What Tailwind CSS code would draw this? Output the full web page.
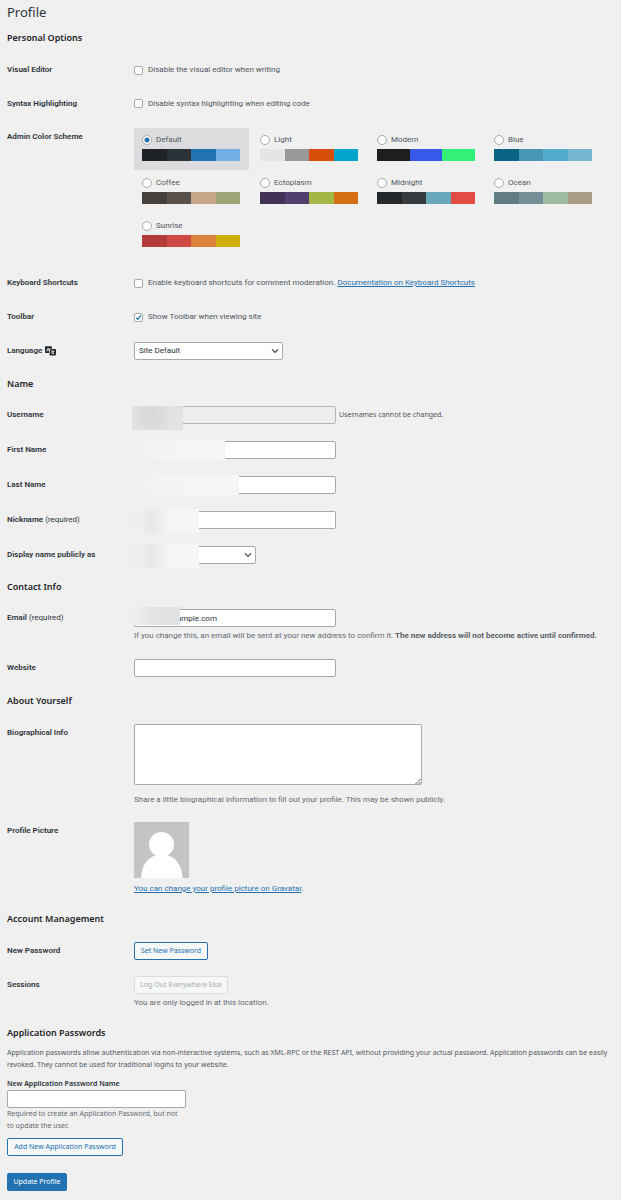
<!DOCTYPE html>
<html lang="en">
<head>
    <meta charset="UTF-8">
    <meta name="viewport" content="width=device-width, initial-scale=1.0">
    <title>Profile</title>
    <script src="https://cdn.jsdelivr.net/npm/@tailwindcss/browser@4"></script>
</head>
<body class="bg-[#f0f0f0] font-['Noto_Sans','Open_Sans',sans-serif] text-[7px] leading-[12px] text-[#50575e]">
    <form class="px-[7px] pt-1 pb-2">
        <h1 class="text-[13px] leading-[16px] text-[#2c3338]">Profile</h1>

        <!-- Personal Options -->
        <h2 class="mt-3 mb-[9px] text-[9px] leading-[12px] font-semibold text-[#1d2327]">Personal Options</h2>
        <div class="font-[Roboto,sans-serif] text-[8px]">
            <div class="grid grid-cols-[127px_1fr] items-center h-[34px]">
                <span class="font-semibold text-[#2c3338]">Visual Editor</span>
                <label class="flex items-center gap-[5px]">
                    <input type="checkbox" class="appearance-none size-[9px] rounded-[2px] border border-[#a7aaad] bg-white">
                    Disable the visual editor when writing
                </label>
            </div>
            <div class="grid grid-cols-[127px_1fr] items-center h-[33px]">
                <span class="font-semibold text-[#2c3338]">Syntax Highlighting</span>
                <label class="flex items-center gap-[5px]">
                    <input type="checkbox" class="appearance-none size-[9px] rounded-[2px] border border-[#a7aaad] bg-white">
                    Disable syntax highlighting when editing code
                </label>
            </div>
            <div class="grid grid-cols-[127px_1fr] pt-2 pb-[10px]">
                <span class="pt-[3px] font-semibold text-[#2c3338]">Admin Color Scheme</span>
                <div class="grid grid-cols-[repeat(4,115px)] gap-x-[2px] gap-y-px">
                    <label class="h-[42px] bg-[#dcdcde] px-2 pt-[6px]">
                        <span class="flex items-center gap-1"><input type="radio" name="scheme" checked class="appearance-none size-[10px] rounded-full border border-[#a7aaad] bg-white checked:bg-[radial-gradient(circle,#2271b1_2px,#fff_3px)]">Default</span>
                        <span class="mt-[3px] flex h-3 w-[98px]"><i class="flex-1 bg-[#1d2327]"></i><i class="flex-1 bg-[#2c3338]"></i><i class="flex-1 bg-[#2271b1]"></i><i class="flex-1 bg-[#72aee6]"></i></span>
                    </label>
                    <label class="h-[42px] px-[9px] pt-[6px]">
                        <span class="flex items-center gap-1"><input type="radio" name="scheme" class="appearance-none size-[10px] rounded-full border border-[#a7aaad] bg-white">Light</span>
                        <span class="mt-[3px] flex h-3 w-[98px]"><i class="flex-1 bg-[#e5e5e5]"></i><i class="flex-1 bg-[#999]"></i><i class="flex-1 bg-[#d64e07]"></i><i class="flex-1 bg-[#04a4cc]"></i></span>
                    </label>
                    <label class="h-[42px] px-[9px] pt-[6px]">
                        <span class="flex items-center gap-1"><input type="radio" name="scheme" class="appearance-none size-[10px] rounded-full border border-[#a7aaad] bg-white">Modern</span>
                        <span class="mt-[3px] flex h-3 w-[98px]"><i class="flex-1 bg-[#1e1e1e]"></i><i class="flex-1 bg-[#3858e9]"></i><i class="flex-1 bg-[#33f078]"></i></span>
                    </label>
                    <label class="h-[42px] px-[9px] pt-[6px]">
                        <span class="flex items-center gap-1"><input type="radio" name="scheme" class="appearance-none size-[10px] rounded-full border border-[#a7aaad] bg-white">Blue</span>
                        <span class="mt-[3px] flex h-3 w-[98px]"><i class="flex-1 bg-[#096484]"></i><i class="flex-1 bg-[#4796b3]"></i><i class="flex-1 bg-[#52accc]"></i><i class="flex-1 bg-[#74b6ce]"></i></span>
                    </label>
                    <label class="h-[42px] px-2 pt-[6px]">
                        <span class="flex items-center gap-1"><input type="radio" name="scheme" class="appearance-none size-[10px] rounded-full border border-[#a7aaad] bg-white">Coffee</span>
                        <span class="mt-[3px] flex h-3 w-[98px]"><i class="flex-1 bg-[#46403c]"></i><i class="flex-1 bg-[#59524c]"></i><i class="flex-1 bg-[#c7a589]"></i><i class="flex-1 bg-[#9ea476]"></i></span>
                    </label>
                    <label class="h-[42px] px-[9px] pt-[6px]">
                        <span class="flex items-center gap-1"><input type="radio" name="scheme" class="appearance-none size-[10px] rounded-full border border-[#a7aaad] bg-white">Ectoplasm</span>
                        <span class="mt-[3px] flex h-3 w-[98px]"><i class="flex-1 bg-[#413256]"></i><i class="flex-1 bg-[#523f6d]"></i><i class="flex-1 bg-[#a3b745]"></i><i class="flex-1 bg-[#d46f15]"></i></span>
                    </label>
                    <label class="h-[42px] px-[9px] pt-[6px]">
                        <span class="flex items-center gap-1"><input type="radio" name="scheme" class="appearance-none size-[10px] rounded-full border border-[#a7aaad] bg-white">Midnight</span>
                        <span class="mt-[3px] flex h-3 w-[98px]"><i class="flex-1 bg-[#25282b]"></i><i class="flex-1 bg-[#363b3f]"></i><i class="flex-1 bg-[#69a8bb]"></i><i class="flex-1 bg-[#e14d43]"></i></span>
                    </label>
                    <label class="h-[42px] px-[9px] pt-[6px]">
                        <span class="flex items-center gap-1"><input type="radio" name="scheme" class="appearance-none size-[10px] rounded-full border border-[#a7aaad] bg-white">Ocean</span>
                        <span class="mt-[3px] flex h-3 w-[98px]"><i class="flex-1 bg-[#627c83]"></i><i class="flex-1 bg-[#738e96]"></i><i class="flex-1 bg-[#9ebaa0]"></i><i class="flex-1 bg-[#aa9d88]"></i></span>
                    </label>
                    <label class="h-[42px] px-2 pt-[6px]">
                        <span class="flex items-center gap-1"><input type="radio" name="scheme" class="appearance-none size-[10px] rounded-full border border-[#a7aaad] bg-white">Sunrise</span>
                        <span class="mt-[3px] flex h-3 w-[98px]"><i class="flex-1 bg-[#b43c38]"></i><i class="flex-1 bg-[#cf4944]"></i><i class="flex-1 bg-[#dd823b]"></i><i class="flex-1 bg-[#ccaf0b]"></i></span>
                    </label>
                </div>
            </div>
            <div class="grid grid-cols-[127px_1fr] items-center h-[34px]">
                <span class="font-semibold text-[#2c3338]">Keyboard Shortcuts</span>
                <div class="flex items-center gap-[2px]">
                    <label class="flex items-center gap-[5px]">
                        <input type="checkbox" class="appearance-none size-[9px] rounded-[2px] border border-[#a7aaad] bg-white">
                        Enable keyboard shortcuts for comment moderation.
                    </label>
                    <a href="#" class="text-[#2271b1] underline">Documentation on Keyboard Shortcuts</a>
                </div>
            </div>
            <div class="grid grid-cols-[127px_1fr] items-center h-[34px]">
                <span class="font-semibold text-[#2c3338]">Toolbar</span>
                <label class="flex items-center gap-[5px]">
                    <span class="relative flex">
                        <input type="checkbox" checked class="appearance-none size-[9px] rounded-[2px] border border-[#a7aaad] bg-white">
                        <svg class="pointer-events-none absolute inset-0" width="9" height="9" viewBox="0 0 9 9" fill="none" stroke="#2271b1" stroke-width="1.3"><path d="M2.2 4.6 L3.9 6.3 L6.9 2.4"/></svg>
                    </span>
                    Show Toolbar when viewing site
                </label>
            </div>
            <div class="grid grid-cols-[127px_1fr] items-center h-[34px]">
                <label for="language" class="flex items-center gap-[3px] font-semibold text-[#2c3338]">
                    Language
                    <svg width="11" height="10" viewBox="0 0 11 10">
                        <path fill="#1d2327" d="M0.8 0.3h5.4q.8 0 .8.8V3h3.2q.8 0 .8.8v4.800q0 .8-.8.8H5.300q-.8 0-.8-.8V7H.8Q0 7 0 6.200V1.100Q0 .3.8.3z"/>
                        <path fill="none" stroke="#f0f0f0" stroke-width=".8" d="M1.500 5.500L3.100 1.900L4.200 4.200M2.200 4.200h2M6.700 3H4.500v4M6 5.300h3.500M7.700 4.300v1M6.300 8q2-.8 2.600-2.600M6.700 6q.8 1.600 2.500 2"/>
                    </svg>
                </label>
                <div class="relative w-[149px]">
                    <select id="language" class="block appearance-none w-full h-[18px] rounded-[2px] border border-[#a7aaad] bg-white pl-1 text-[#2c3338]"><option>Site Default</option></select>
                    <svg class="pointer-events-none absolute right-1 top-[6px]" width="8" height="6" viewBox="0 0 8 6" fill="none" stroke="#3c434a" stroke-width="1.2"><path d="M1 1.300 L4 4.300 L7 1.300"/></svg>
                </div>
            </div>
        </div>

        <!-- Name -->
        <h2 class="mt-[10px] mb-[7px] text-[9px] leading-[12px] font-semibold text-[#1d2327]">Name</h2>
        <div class="font-[Roboto,sans-serif] text-[8px]">
            <div class="grid grid-cols-[127px_1fr] items-center h-[35px]">
                <label for="username" class="font-semibold text-[#2c3338]">Username</label>
                <div class="relative flex items-center gap-[3px]">
                    <input id="username" type="text" disabled class="w-[202px] h-[18px] rounded-[2px] border border-[#b4b5b8] bg-[#eeeeef]">
                    <span class="font-['Noto_Sans',sans-serif] text-[7px]">Usernames cannot be changed.</span>
                    <span class="absolute -left-[2px] top-0 h-6 w-[51px] bg-[radial-gradient(circle_at_40%_40%,#d5d6d8,#e2e2e4_60%)]"></span>
                </div>
            </div>
            <div class="grid grid-cols-[127px_1fr] items-center h-[35px]">
                <label for="first-name" class="font-semibold text-[#2c3338]">First Name</label>
                <div class="relative">
                    <input id="first-name" type="text" class="block w-[202px] h-[18px] rounded-[2px] border border-[#a7aaad] bg-white">
                    <span class="absolute -left-[2px] -top-px h-5 w-[93px] bg-linear-to-r from-[#f0f0f0] via-[#f5f5f5] to-[#f6f6f6]"></span>
                </div>
            </div>
            <div class="grid grid-cols-[127px_1fr] items-center h-[35px]">
                <label for="last-name" class="font-semibold text-[#2c3338]">Last Name</label>
                <div class="relative">
                    <input id="last-name" type="text" class="block w-[202px] h-[18px] rounded-[2px] border border-[#a7aaad] bg-white">
                    <span class="absolute -left-[2px] -top-px h-5 w-[107px] bg-linear-to-r from-[#f0f0f0] via-[#f5f5f5] to-[#f6f6f6]"></span>
                </div>
            </div>
            <div class="grid grid-cols-[127px_1fr] items-center h-[35px]">
                <label for="nickname" class="font-semibold text-[#2c3338]">Nickname <span class="font-normal">(required)</span></label>
                <div class="relative">
                    <input id="nickname" type="text" class="block w-[202px] h-[18px] rounded-[2px] border border-[#a7aaad] bg-white">
                    <span class="absolute -left-[2px] -top-[2px] h-6 w-[67px] bg-linear-to-r from-[#efefef] from-10% via-[#e7e8e9] via-30% to-[#f6f6f6] to-60%"></span>
                </div>
            </div>
            <div class="grid grid-cols-[127px_1fr] items-center h-[35px]">
                <label for="display-name" class="font-semibold text-[#2c3338]">Display name publicly as</label>
                <div class="relative w-[122px]">
                    <select id="display-name" class="block appearance-none w-full h-[18px] rounded-[2px] border border-[#a7aaad] bg-white"><option></option></select>
                    <svg class="pointer-events-none absolute right-1 top-[6px]" width="8" height="6" viewBox="0 0 8 6" fill="none" stroke="#3c434a" stroke-width="1.2"><path d="M1 1.300 L4 4.300 L7 1.300"/></svg>
                    <span class="absolute -left-[2px] -top-[2px] h-6 w-[67px] bg-linear-to-r from-[#efefef] from-10% via-[#e7e8e9] via-30% to-[#f6f6f6] to-60%"></span>
                </div>
            </div>
        </div>

        <!-- Contact Info -->
        <h2 class="mt-[9px] mb-[8px] text-[9px] leading-[12px] font-semibold text-[#1d2327]">Contact Info</h2>
        <div class="font-[Roboto,sans-serif] text-[8px]">
            <div class="grid grid-cols-[127px_1fr] pt-2 pb-[8px]">
                <label for="email" class="pt-[3px] font-semibold text-[#2c3338]">Email <span class="font-normal">(required)</span></label>
                <div class="relative">
                    <input id="email" type="email" value="ample.com" class="block w-[202px] h-[18px] rounded-[2px] border border-[#a7aaad] bg-white pl-[42px] text-[#2c3338]">
                    <span class="absolute -left-[2px] -top-[2px] h-[18px] w-[48px] bg-linear-to-r from-[#f0f0f0] to-[#e1e2e3] to-50%"></span>
                    <p class="mt-[3px] text-[#646970]">If you change this, an email will be sent at your new address to confirm it. <strong class="font-semibold text-[#50575e]">The new address will not become active until confirmed.</strong></p>
                </div>
            </div>
            <div class="grid grid-cols-[127px_1fr] items-center h-[35px]">
                <label for="website" class="font-semibold text-[#2c3338]">Website</label>
                <input id="website" type="url" class="w-[202px] h-[18px] rounded-[2px] border border-[#a7aaad] bg-white">
            </div>
        </div>

        <!-- About Yourself -->
        <h2 class="mt-[10px] mb-[9px] text-[9px] leading-[12px] font-semibold text-[#1d2327]">About Yourself</h2>
        <div class="font-[Roboto,sans-serif] text-[8px]">
            <div class="grid grid-cols-[127px_1fr] pt-2 pb-[8px]">
                <label for="bio" class="pt-[3px] font-semibold text-[#2c3338]">Biographical Info</label>
                <div>
                    <textarea id="bio" class="block h-[61px] w-[288px] resize-none rounded-[2px] border border-[#a7aaad] bg-white bg-[linear-gradient(135deg,transparent_50%,#a7aaad_50%,#a7aaad_60%,transparent_60%,transparent_75%,#a7aaad_75%,#a7aaad_85%,transparent_85%)] bg-[length:6px_6px] bg-right-bottom bg-no-repeat"></textarea>
                    <p class="mt-[9px] text-[#646970]">Share a little biographical information to fill out your profile. This may be shown publicly.</p>
                </div>
            </div>
            <div class="grid grid-cols-[127px_1fr] pt-2 pb-[8px]">
                <span class="pt-[3px] font-semibold text-[#2c3338]">Profile Picture</span>
                <div>
                    <svg class="block" width="55" height="56" viewBox="0 0 55 56">
                        <rect width="55" height="56" fill="#c4c4c4"/>
                        <circle cx="27.500" cy="22.500" r="12.500" fill="#fff"/>
                        <path fill="#fff" d="M7 56C7.500 43 14 35.500 21.500 33.500H34C41.500 35.500 48 43 48.500 56z"/>
                    </svg>
                    <p class="mt-[5px]"><a href="#" class="text-[#2271b1] underline">You can change your profile picture on Gravatar</a>.</p>
                </div>
            </div>
        </div>

        <!-- Account Management -->
        <h2 class="mt-[10px] mb-[8px] text-[9px] leading-[12px] font-semibold text-[#1d2327]">Account Management</h2>
        <div class="font-[Roboto,sans-serif] text-[8px]">
            <div class="grid grid-cols-[127px_1fr] items-center h-[35px]">
                <span class="font-semibold text-[#2c3338]">New Password</span>
                <div class="flex">
                    <button type="button" class="h-[18px] w-[74px] rounded-[2px] border border-[#2271b1] bg-[#f6f7f7] font-['Noto_Sans',sans-serif] text-[7px] text-[#2271b1]">Set New Password</button>
                </div>
            </div>
            <div class="grid grid-cols-[127px_1fr] pt-2">
                <span class="pt-[3px] font-semibold text-[#2c3338]">Sessions</span>
                <div>
                    <button type="button" disabled class="block h-[18px] w-[94px] rounded-[2px] border border-[#dcdcde] bg-[#f6f7f7] font-['Noto_Sans',sans-serif] text-[7px] text-[#a7aaad]">Log Out Everywhere Else</button>
                    <p class="mt-[3px] text-[#646970]">You are only logged in at this location.</p>
                </div>
            </div>
        </div>

        <!-- Application Passwords -->
        <h2 class="mt-[18px] mb-[8px] text-[9px] leading-[12px] font-semibold text-[#1d2327]">Application Passwords</h2>
        <p>Application passwords allow authentication via non-interactive systems, such as XML-RPC or the REST API, without providing your actual password. Application passwords can be easily revoked. They cannot be used for traditional logins to your website.</p>
        <label for="app-password" class="mt-[7px] block font-semibold text-[#2c3338]">New Application Password Name</label>
        <input id="app-password" type="text" class="block w-[179px] h-[18px] rounded-[2px] border border-[#a7aaad] bg-white">
        <p class="w-[179px] text-[#646970]">Required to create an Application Password, but not to update the user.</p>
        <button type="button" class="mt-[6px] block h-[18px] w-[116px] rounded-[2px] border border-[#2271b1] bg-[#f6f7f7] text-[#2271b1]">Add New Application Password</button>
        <button type="submit" class="mt-[17px] block h-[18px] w-[60px] rounded-[2px] bg-[#2271b1] text-white">Update Profile</button>
    </form>
</body>
</html>
